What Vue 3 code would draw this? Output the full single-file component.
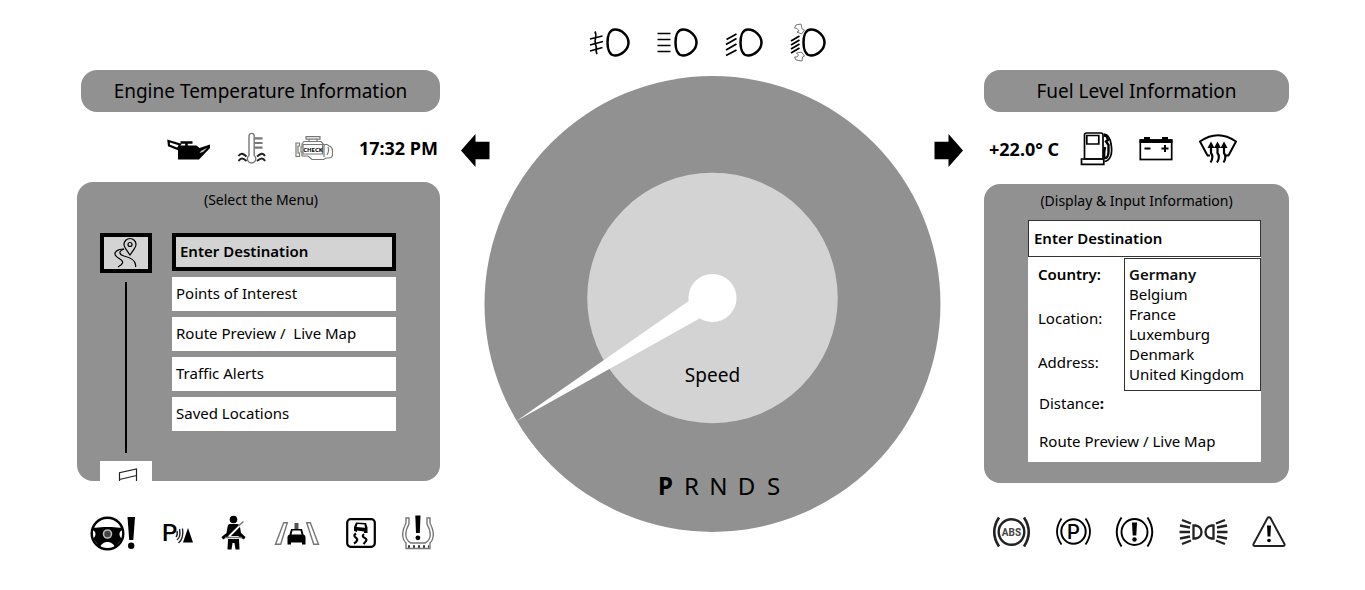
<script setup>
import { ref } from 'vue';

const menuItems = [
  'Enter Destination',
  'Points of Interest',
  'Route Preview /  Live Map',
  'Traffic Alerts',
  'Saved Locations'
];
const activeItem = ref(0);

const countries = ['Germany', 'Belgium', 'France', 'Luxemburg', 'Denmark', 'United Kingdom'];
const country = ref('Germany');

const gears = [
  { name: 'P', x: 181 },
  { name: 'R', x: 207 },
  { name: 'N', x: 234 },
  { name: 'D', x: 262 },
  { name: 'S', x: 289 }
];
const gear = ref('P');

const lamp = 'M26 1.5C20 1.5 18.5 9 18.5 14.500S20 27.500 26 27.500C33 27.500 39.500 21 39.500 14.500S33 1.500 26 1.500Z';
</script>

<template>
  <main class="cluster">
    <section class="side side-left">
      <h2 class="title title-left">Engine Temperature Information</h2>
      <div class="status status-left">
        <svg class="icon" width="45" height="26" viewBox="0 0 45 26">
          <path d="M12 14 14.5 10.5H30.5L33.5 13 44 9.5V13L33 24.5H12Z" fill="#000" />
          <path d="M2.5 6 14 9.5 12 14 3 10.5Z" class="line" stroke-width="2.2" />
          <path d="M14.5 7.5H26.5M20.5 7V12" class="line" stroke-width="2.6" />
          <path d="M33.5 18 35 16 41.5 12.5 37 17Z" fill="#ccc" />
        </svg>
        <svg class="icon" width="32" height="32" viewBox="0 0 32 32">
          <path d="M12 23.5V4A2.6 2.6 0 0 1 17.2 4V23.5A4.2 4.2 0 1 1 12 23.5Z" class="line gray" stroke-width="1.4" />
          <path d="M17.5 6.3H25.5M17.5 11H25.5M17.5 15.7H25.5" class="line gray" stroke-width="2.2" />
          <g class="line dark" stroke-width="2">
            <path d="M1.5 24C4 20.5 6 21.5 9.5 24.5M1.5 29C4 25.5 6 26 9.5 29" />
            <path d="M28 24C26 20.5 24 21.5 20 24.5M28 29C26 25.5 24 26 20 29" />
          </g>
        </svg>
        <svg class="icon" width="38" height="27" viewBox="0 0 38 27">
          <g class="line gray" stroke-width="1.2">
            <path d="M11 1.7H25V4.2H11ZM14 4.2V6.5M22 4.2V6.5" />
            <path d="M9 6.5H26L29 10V9.5H32L36 12Q37.5 13 37.5 16V20Q37 23 34 23H31L28.5 24.5H17L13 21H7V17H6V12H7V9Z" />
            <path d="M1 8H4.5V11H3V18H4.5V21.5H1ZM29 10.5V22M33 12Q34.5 16 32 20M8 9.5H27.5V19H8Z" />
          </g>
          <text x="18" y="17" class="check">CHECK</text>
        </svg>
        <span class="reading">17:32 PM</span>
      </div>

      <div class="panel">
        <p class="caption">(Select the Menu)</p>
        <div class="menu">
          <div class="rail">
            <button class="rail-button active" aria-label="Navigation">
              <svg width="44" height="32" viewBox="0 0 44 32">
                <g class="line" stroke-width="1.2">
                  <path d="M26 18C23 13.5 20 10.5 20 7.5A6 6 0 0 1 32 7.5C32 10.5 29 13.5 26 18Z" />
                  <circle cx="26" cy="7.5" r="2" />
                  <path d="M20 12C13 12 9 15.500 12 19C14 21.500 20 23 18.500 26Q18 28 14 30" />
                  <path d="M20 12C14 14.500 15 17.500 20 19C26 20.500 33 23 31.5 30" />
                </g>
              </svg>
            </button>
            <span class="rail-line"></span>
            <button class="rail-button clipped" aria-label="Music">
              <svg width="52" height="20" viewBox="0 0 52 20">
                <path d="M19.5 21V11.7L36.5 8V21M19.5 18.5 36.5 14.5" class="line dark" stroke-width="1.2" />
              </svg>
            </button>
          </div>
          <nav class="menu-list">
            <button v-for="(item, i) in menuItems" :key="item" class="menu-item" :class="{ active: i === activeItem }"
              @click="activeItem = i">{{ item }}</button>
          </nav>
        </div>
      </div>

      <div class="warnings warnings-left">
        <svg class="icon" width="46" height="36" viewBox="0 0 46 36">
          <circle cx="17.5" cy="18.5" r="15.8" class="line" stroke-width="2.4" />
          <path d="M2 12.5C8 13 11 12 17.5 12S27 13 33 12.5V15C29 16 28 20 32 24L25 32C23 28 20 27 17.5 27S12 28 10 32L3 24C7 20 6 16 2 15Z" fill="#000" />
          <circle cx="17.5" cy="19" r="4" fill="#444" stroke="#bbb" stroke-width="1.6" />
          <path d="M37.5 2H45L43.3 25H39.2Z" fill="#000" />
          <circle cx="41.2" cy="30.8" r="3.2" fill="#000" />
        </svg>
        <svg class="icon" width="32" height="36" viewBox="0 -5 32 36">
          <text x="0" y="21" class="letter sensor">P</text>
          <path d="M14 17Q16 15 15 11M15 20Q19 17 17.5 9M16.500 23Q22 18.5 20.5 8.500" class="line dark" stroke-width="1.4" />
          <path d="M26 8 31 22.500H21Z" fill="#000" />
        </svg>
        <svg class="icon" width="28" height="36" viewBox="0 0 28 36">
          <circle cx="13.5" cy="4.5" r="3.8" fill="#000" />
          <path d="M10 9H17Q19.5 9 20 12L21 18 25.5 22 24 24.5 18 21H9L3 24.5 1.5 22 6.5 18 7.5 12Q8 9 10 9Z" fill="#000" />
          <path d="M8 24H19L19.5 34.5H15.5L14.5 28H12.5L11.5 34.5H7.5Z" fill="#000" />
          <path d="M20.5 10 9 21.5" class="line white" stroke-width="1.8" />
          <path d="M23.5 6.5 18.5 11M5 22.5H22" class="line gray" stroke-width="1.5" />
        </svg>
        <svg class="icon" width="46" height="27" viewBox="0 0 46 27">
          <g class="line gray" stroke-width="1.4">
            <path d="M9.7 2.7H13.3L6.7 24.3H1.5Z" />
            <path d="M32.7 2.7H36.3L44.5 24.3H39.7Z" />
          </g>
          <path d="M20.5 3H24.5V9H20.5Z" fill="#555" />
          <path fill-rule="evenodd" d="M17 9H28L29.5 14.5Q31.5 15 31.5 17V24.5H28V22.5H17V24.5H13.5V17Q13.5 15 15.5 14.5ZM18.5 10.5 17.5 14.5H27.5L26.5 10.5Z" fill="#000" />
        </svg>
        <svg class="icon" width="30" height="30" viewBox="0 0 30 30">
          <rect x="1.2" y="1.2" width="27.6" height="27.6" rx="3.5" class="line" stroke-width="2.2" />
          <path fill-rule="evenodd" d="M10 4.5 20 5 21.5 9.5V15H18V13.5L11 12.5V14L8 13V9ZM11.5 6 10.5 9 19 9.7 18.5 6.5Z" fill="#000" />
          <path d="M10 15.5C5 19 13 19.5 11 22.5Q10 24.5 8 25.5M18 16C13.5 20 22.5 19.5 20 23Q19 24.5 17.5 26" class="line" stroke-width="2.2" />
        </svg>
        <svg class="icon" width="32" height="36" viewBox="0 0 32 36">
          <path d="M4 3H7V9C2 18 3 25 9 28H23C29 25 30 18 25 9V3H28V8C32 16 33 23 28 28V33.5H4V28C-1 23 0 16 4 8Z" class="line gray" stroke-width="1.4" />
          <path d="M6 31.5H27" stroke="#333" stroke-width="2.4" stroke-dasharray="2 3" />
          <path d="M13.3 .5H18.5L17.8 18H14Z" fill="#000" />
          <circle cx="15.9" cy="22.8" r="2.4" fill="#000" />
        </svg>
      </div>
    </section>

    <section class="center">
      <div class="lights">
        <svg class="icon" width="41" height="40" viewBox="0 -5 41 40">
          <path :d="lamp" class="line" stroke-width="2.5" />
          <path d="M1 11 13.5 8M1 17 14 13.5M1 23 13.5 19.5M6 3.5C9 9 4.5 11 6.5 16S6 22 8 26" class="line" stroke-width="1.7" />
        </svg>
        <svg class="icon" width="41" height="40" viewBox="0 -5 41 40">
          <path :d="lamp" class="line" stroke-width="2.5" />
          <path d="M.5 5.5H13.5M.5 11.5H13.5M.5 17.5H13.5M.5 23.5H13.5" class="line" stroke-width="1.7" />
        </svg>
        <svg class="icon" width="38" height="40" viewBox="3 -5 38 40">
          <path :d="lamp" class="line" stroke-width="2.5" />
          <path d="M4.5 11.5 14.5 6M4 16.5 14.5 10.5M4 22 14.5 16M4 27.5 14.5 22" class="line" stroke-width="1.8" />
        </svg>
        <svg class="icon" width="36" height="40" viewBox="5 -5 36 40">
          <path :d="lamp" class="line" stroke-width="2.5" />
          <path d="M6 13 14.5 8M6 17 14.5 12M6 21 14.5 16M6 25 14.5 20" class="line" stroke-width="1.8" />
          <path d="M11-3 16-4 17 1 19.5 2 16.5 6 12 4 14 3 12 .5 9.5 0Z" class="line gray" />
          <path d="M11 32 17 33 17.5 29 19.5 28 16.5 24 11.5 25 13.5 27 12 29 9.5 29Z" class="line gray" />
        </svg>
      </div>
      <div class="gauge">
        <svg class="dial" viewBox="0 0 456 456" role="img" aria-label="Speed gauge">
          <circle cx="228" cy="227.5" r="227.5" fill="#919191" />
          <circle cx="228" cy="221.5" r="125" fill="#d3d3d3" />
          <path d="M32 344.5 205 224 228 222 215 242Z" fill="#fff" />
          <circle cx="228" cy="221.5" r="24" fill="#fff" />
          <text x="228" y="305" class="speed">Speed</text>
          <text v-for="g in gears" :key="g.name" :x="g.x" y="418" class="gear"
            :class="{ selected: g.name === gear }">{{ g.name }}</text>
        </svg>
        <div class="turns">
          <svg width="29" height="33" viewBox="0 0 29 33">
            <path d="M0 16.5 14.5 0V7.7H28.5V25.3H14.5V33Z" />
          </svg>
          <svg width="29" height="33" viewBox="0 0 29 33">
            <path d="M29 16.5 14.5 0V7.7H.5V25.3H14.5V33Z" />
          </svg>
        </div>
      </div>
    </section>

    <section class="side side-right">
      <h2 class="title">Fuel Level Information</h2>
      <div class="status status-right">
        <span class="reading">+22.0° C</span>
        <svg class="icon fuel" width="33" height="34" viewBox="0 0 33 34">
          <g class="line" stroke-width="1.7">
            <path d="M4.5 27V3Q4.5 1 6.5 1H21Q23 1 23 3V27Z" />
            <path d="M6.8 3.5H18.8V12H6.8ZM1.5 27H23.8V32.3H1.5Z" />
            <path d="M24 2Q30 3 31 12C33 22 30 29 24.5 29.5" />
            <path d="M24 3.5 26.5 4 28 8 26 9.5 28.5 13V20Q28 26 25.5 26T25 15" stroke-width="2.4" />
          </g>
        </svg>
        <svg class="icon" width="34" height="24" viewBox="0 0 34 24">
          <rect x="1.3" y="3" width="31.4" height="19.5" class="line" stroke-width="1.7" />
          <path d="M.5 2.5H5V0H11V2.5H23V0H29V2.5H33.5V6H.5Z" fill="#000" />
          <path d="M5.5 11.5H11.5M22.5 11.5H29.5M26 8V15" class="line" stroke-width="2" />
        </svg>
        <svg class="icon" width="38" height="32" viewBox="0 0 38 32">
          <path d="M8.5 22.5 1 8.5Q19-4 37 8.5L29.5 22.5" class="line" stroke-width="2" />
          <path d="M8 22.5H11M27 22.5H30M12 13V20Q15 24 11.5 29.5M18.5 13V20Q21.5 24 18 29.5M25 13V20Q28 24 24.5 29.5" class="line" stroke-width="2.2" />
          <path d="M12 8.5 15.5 15H8.5ZM18.5 8.5 22 15H15ZM25 8.5 28.5 15H21.5Z" fill="#000" />
        </svg>
      </div>

      <div class="panel panel-right">
        <p class="caption">(Display &amp; Input Information)</p>
        <form class="entry" @submit.prevent>
          <h3 class="entry-title">Enter Destination</h3>
          <div class="entry-top">
            <div class="labels">
              <label class="strong" for="country">Country:</label>
              <span>Location:</span>
              <span>Address:</span>
            </div>
            <select id="country" v-model="country" class="countries" size="6">
              <option v-for="c in countries" :key="c" :value="c">{{ c }}</option>
            </select>
          </div>
          <p class="entry-row">Distance<b>:</b></p>
          <p class="entry-row">Route Preview / Live Map</p>
        </form>
      </div>

      <div class="warnings warnings-right">
        <svg class="icon" width="39" height="32" viewBox="0 0 39 32">
          <circle cx="19.5" cy="16" r="12.8" class="line dark" stroke-width="2.4" />
          <path d="M7 1.5Q-2.5 16 7 30.5M32 1.5Q41.5 16 32 30.5" class="line dark" stroke-width="2.6" />
          <text x="19.5" y="20" class="letter abs">ABS</text>
        </svg>
        <svg class="icon" width="35" height="30" viewBox="0 0 35 30">
          <circle cx="17.5" cy="14.5" r="12.2" class="line" stroke-width="2" />
          <path d="M5.5 1.5Q-3.5 14.5 5.5 27.5M29.5 1.5Q38.5 14.5 29.5 27.5" class="line" stroke-width="1.8" />
          <text x="17.5" y="21.5" class="letter park">P</text>
        </svg>
        <svg class="icon" width="39" height="32" viewBox="0 0 39 32">
          <circle cx="19.5" cy="16" r="13" class="line" stroke-width="1.9" />
          <path d="M6.5 1.5Q-3 16 6.5 30.5M32.5 1.5Q42 16 32.5 30.5" class="line" stroke-width="1.9" />
          <path d="M17 6.5H22L21.3 19.5H17.7Z" fill="#000" />
          <circle cx="19.5" cy="23.5" r="2.2" fill="#000" />
        </svg>
        <svg class="icon" width="49" height="28" viewBox="0 0 49 28">
          <g class="line dark" stroke-width="2.3">
            <path d="M14.5 7.5H16.5C24.5 8.5 24.5 19.5 16.5 20.5H14.5ZM34.5 7.5H32.5C24.5 8.5 24.5 19.5 32.5 20.5H34.5Z" />
            <path d="M3 2 12 5.5M1 7.5 11 9.5M.5 14H11M1 20.5 11 18.5M3 26 12 22.5" />
            <path d="M46 2 37 5.5M48 7.5 38 9.5M48.5 14H38M48 20.5 38 18.5M46 26 37 22.5" />
          </g>
        </svg>
        <svg class="icon" width="34" height="32" viewBox="0 0 34 32">
          <path d="M15.5 2Q17 .5 18.5 2L32.5 28Q33 30 31 30H3Q1 30 1.5 28Z" class="line dark" stroke-width="2" />
          <path d="M15 9.5H19L18.4 20.5H15.6Z" fill="#000" />
          <circle cx="17" cy="24.5" r="1.8" fill="#000" />
        </svg>
      </div>
    </section>
  </main>
</template>

<style>
body {
  background: #fff;
}
</style>

<style scoped>
.cluster {
  display: grid;
  grid-template-columns: 363fr 544fr 305fr;
  padding: 0 76px 0 77px;
  color: #000;
  font-family: "Noto Sans", "Open Sans", sans-serif;
  font-size: 15px;
  line-height: 20px;
}

h2,
h3,
p {
  margin: 0;
  font-weight: 400;
}

button {
  padding: 0;
  border: 0;
  color: inherit;
  font: inherit;
  cursor: pointer;
}

svg {
  display: block;
  flex-shrink: 0;
}

.line {
  fill: none;
  stroke: #000;
}

.dark {
  stroke: #222;
}

.gray {
  stroke: #777;
}

.white {
  stroke: #fff;
}

.side {
  padding-top: 70px;
}

.title {
  border-radius: 16px;
  background: #919191;
  font-size: 19px;
  line-height: 42px;
  text-align: center;
}

.title-left {
  margin-left: 4px;
}

.status {
  display: flex;
  align-items: center;
  gap: 26px;
  padding-top: 2px;
  box-sizing: border-box;
}

.status-left {
  justify-content: flex-end;
  height: 70px;
  padding-right: 2px;
}

.status-right {
  height: 72px;
  padding-left: 5px;
}

.reading {
  font-size: 18px;
  font-weight: 700;
  white-space: nowrap;
}

.fuel {
  margin-left: -5px;
}

.check {
  font-size: 6px;
  font-weight: 700;
  text-anchor: middle;
}

.letter {
  font-family: Roboto, sans-serif;
  font-weight: 700;
}

.sensor {
  font-size: 24px;
  font-weight: 500;
}

.abs {
  fill: #444;
  font-size: 10px;
  text-anchor: middle;
}

.park {
  font-size: 20px;
  font-weight: 500;
  text-anchor: middle;
}

.panel {
  padding: 8px 44px 0 23px;
  border-radius: 16px;
  background: #919191;
}

.panel-right {
  padding: 7px 28px 21px 44px;
}

.caption {
  margin: 0 -26px 23px 0;
  font-size: 14px;
  text-align: center;
}

.panel-right .caption {
  margin: 0 -12px 9px -28px;
}

.menu {
  display: flex;
  gap: 20px;
}

.rail {
  display: flex;
  flex-direction: column;
  align-items: center;
  width: 52px;
}

.rail-button {
  width: 52px;
  background: #fff;
}

.rail-button.active {
  height: 40px;
  border: 4px solid #000;
  background: #d3d3d3;
}

.rail-button.clipped {
  height: 20px;
  overflow: hidden;
}

.rail-line {
  width: 2px;
  height: 171px;
  margin: 9px 0 8px;
  background: #000;
}

.menu-list {
  display: flex;
  flex: 1;
  flex-direction: column;
  gap: 6px;
}

.menu-item {
  height: 34px;
  padding: 0 4px 2px;
  background: #fff;
  text-align: left;
  white-space: pre;
}

.menu-item.active {
  height: 38px;
  border: 4px solid #000;
  background: #d3d3d3;
  font-weight: 600;
}

.warnings {
  display: flex;
  align-items: center;
}

.warnings-left {
  gap: 26px;
  height: 104px;
  padding-left: 13px;
}

.warnings-right {
  justify-content: space-between;
  height: 98px;
  padding: 0 3px 0 8px;
}

.lights {
  display: flex;
  align-items: center;
  justify-content: center;
  gap: 27px;
  height: 76px;
  padding: 10px 10px 0 0;
  box-sizing: border-box;
}

/* the turn arrows share the dial's grid cell */
.gauge {
  display: grid;
}

.dial,
.turns {
  grid-area: 1 / 1;
}

.dial {
  width: 84%;
  justify-self: center;
  overflow: visible;
}

.turns {
  display: flex;
  justify-content: space-between;
  align-self: start;
  padding: 58px 21px 0;
}

.speed {
  font-size: 19px;
  text-anchor: middle;
}

.gear {
  font-size: 24px;
  text-anchor: middle;
}

.gear.selected {
  font-weight: 700;
}

.entry {
  padding-bottom: 11px;
  background: #fff;
}

.entry-title {
  padding: 0 5px;
  border: 1px solid #333;
  font-size: 15px;
  font-weight: 600;
  line-height: 35px;
}

.entry-top {
  display: flex;
  justify-content: space-between;
  margin-top: 1px;
}

.labels {
  display: flex;
  flex-direction: column;
  gap: 24px;
  padding: 6px 0 0 10px;
}

.strong {
  font-weight: 600;
}

.countries {
  width: 137px;
  height: 133px;
  padding: 5px 0 0;
  border: 1px solid #333;
  border-radius: 0;
  outline: none;
  background: #fff;
  box-sizing: border-box;
  appearance: none;
  color: #000;
  font: inherit;
  overflow: hidden;
}

.countries option {
  height: 20px;
  padding: 0 4px;
  line-height: 20px;
  box-sizing: border-box;
}

.countries option:checked {
  background: #fff linear-gradient(#fff, #fff);
  font-weight: 600;
}

.entry-row {
  padding: 2px 0 0 11px;
}

.entry-row + .entry-row {
  margin-top: 16px;
}
</style>
